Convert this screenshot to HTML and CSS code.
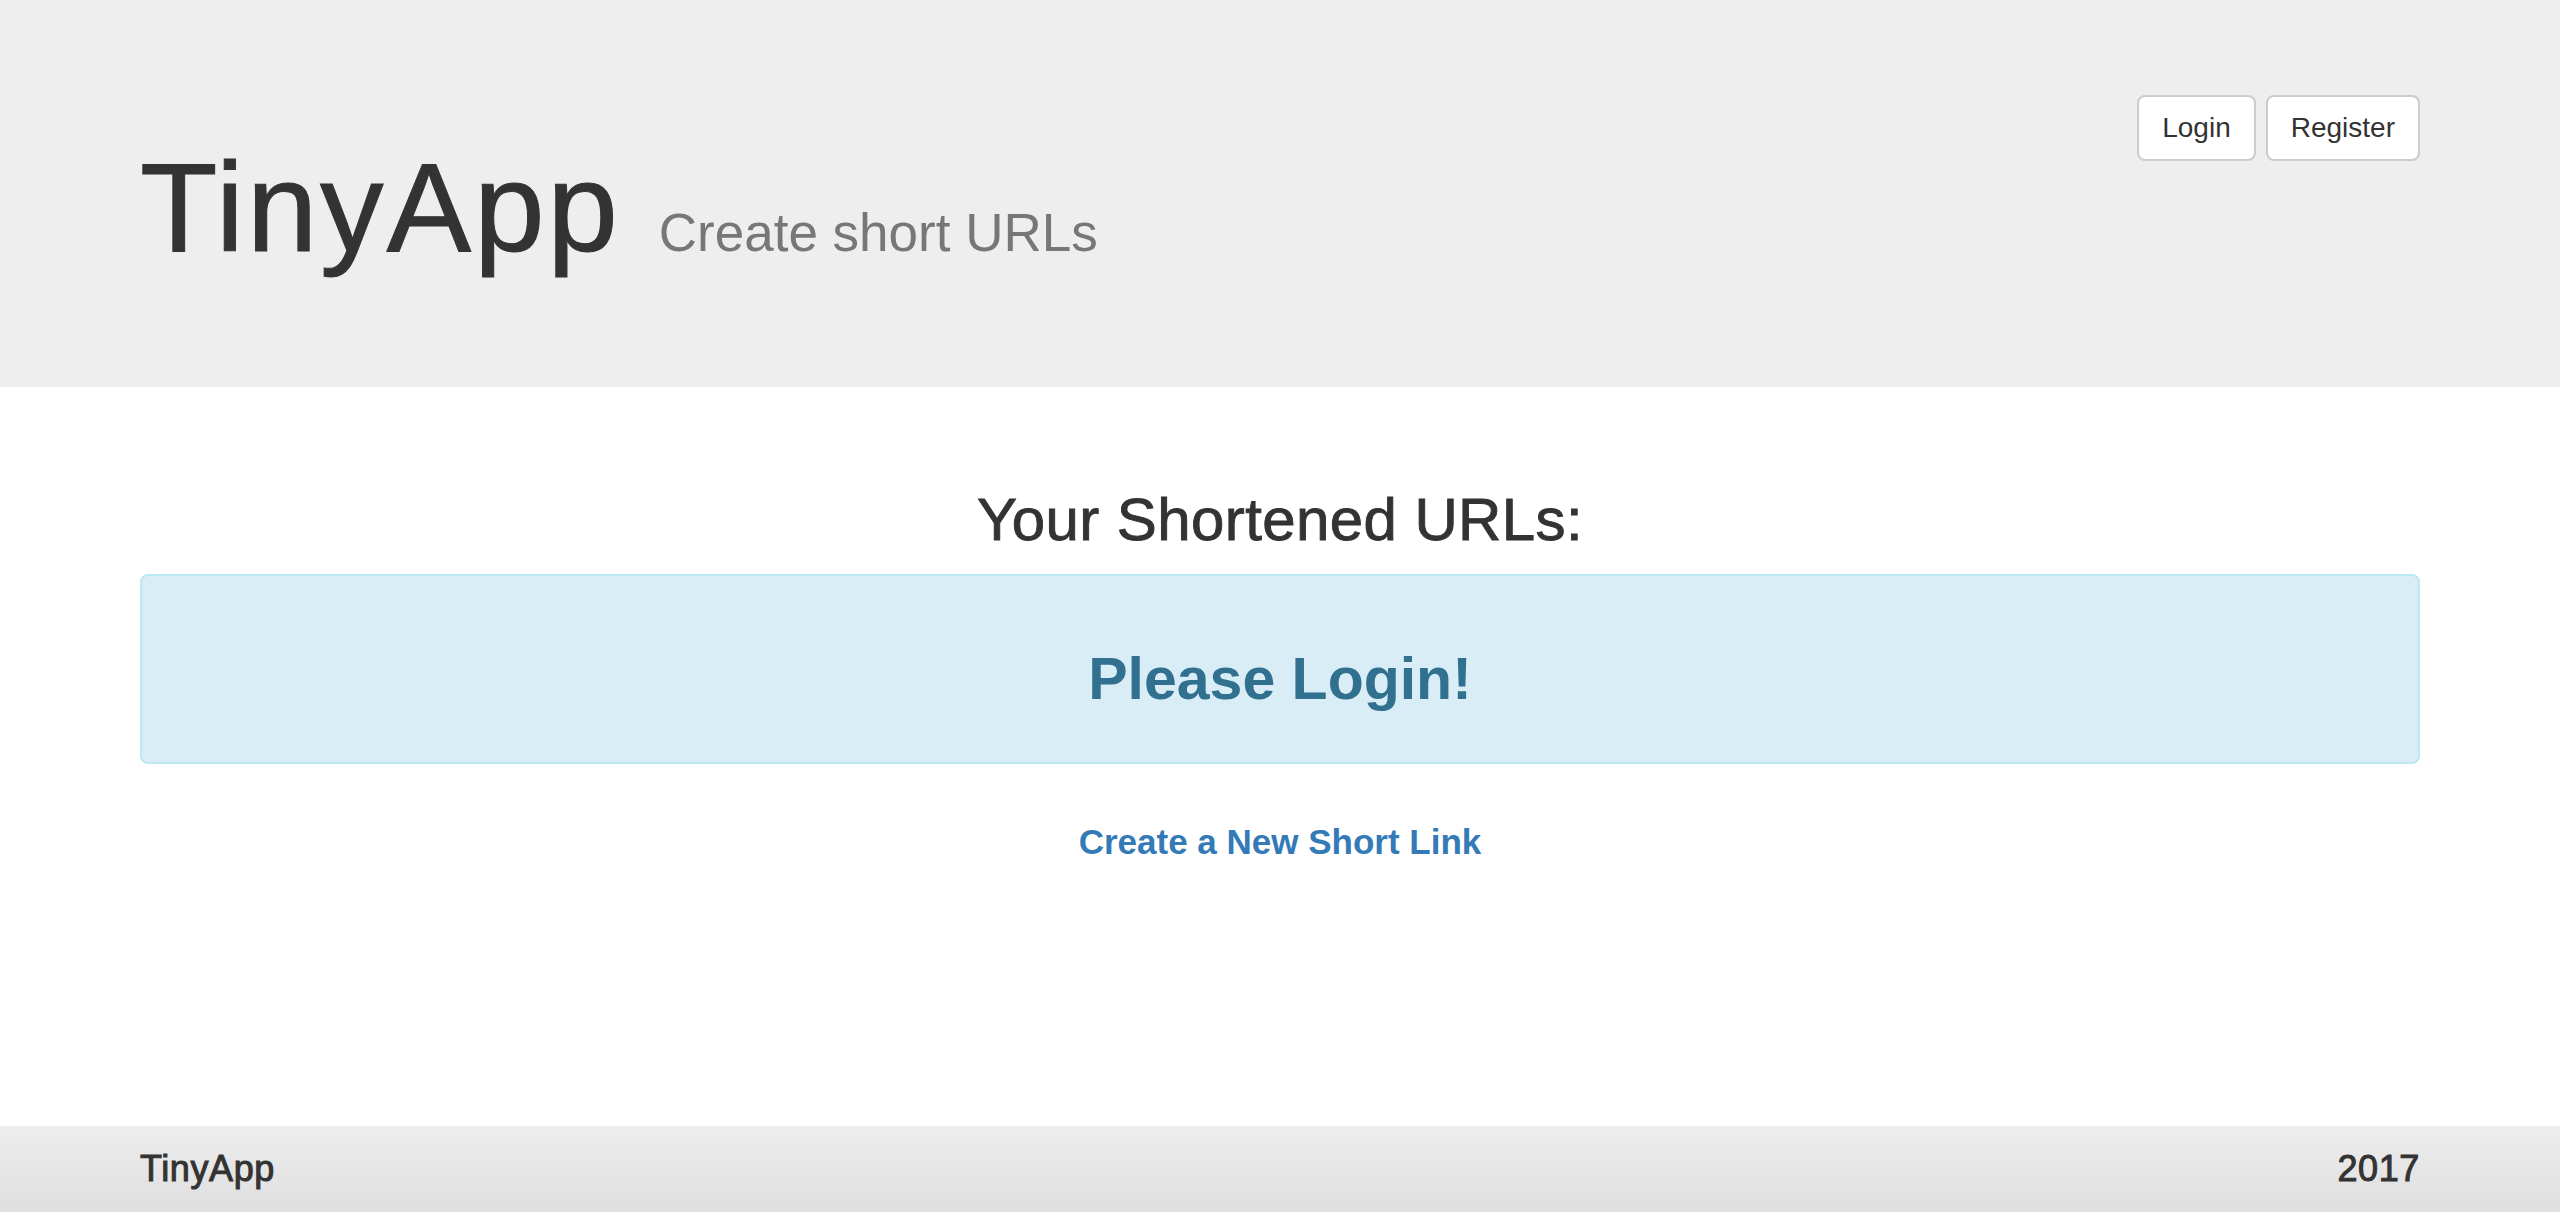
FILE: index.html
```html
<!DOCTYPE html>
<html lang="en">
<head>
<meta charset="utf-8">
<title>TinyApp</title>
<link rel="stylesheet" href="styles.css">
</head>
<body>
<div class="page">
  <header class="jumbotron">
    <div class="container header-row">
      <h1 class="brand">TinyApp<small class="tagline">Create short URLs</small></h1>
      <nav class="auth">
        <a class="btn" href="#">Login</a>
        <a class="btn" href="#">Register</a>
      </nav>
    </div>
  </header>
  <main class="container main">
    <h2 class="title">Your Shortened URLs:</h2>
    <div class="alert">
      <h2 class="alert-text">Please Login!</h2>
    </div>
    <h4 class="new-link"><a href="#">Create a New Short Link</a></h4>
  </main>
  <footer class="footer">
    <div class="container footer-row">
      <span class="footer-text">TinyApp</span>
      <span class="footer-text">2017</span>
    </div>
  </footer>
</div>
</body>
</html>
```
FILE: styles.css
```css
* { box-sizing: border-box; }
html, body { margin: 0; padding: 0; }
body {
  font-family: "Liberation Sans", Arial, sans-serif;
  color: #333;
  background: #fff;
}
.page {
  min-height: 100vh;
  display: flex;
  flex-direction: column;
}
.container {
  width: 100%;
  padding: 0 140px;
}
.jumbotron {
  background: #eeeeee;
  padding: 95px 0 0;
  height: 387px;
}
.header-row {
  display: flex;
  justify-content: space-between;
  align-items: flex-start;
}
.brand {
  margin: 43px 0 0;
  font-size: 127px;
  line-height: 1.1;
  font-weight: normal;
  color: #333;
  letter-spacing: 2.8px;
  -webkit-text-stroke: 1px #333;
}
.tagline {
  font-size: 53px;
  color: #777;
  margin-left: 38px;
  letter-spacing: 0;
  -webkit-text-stroke: 0;
}
.auth {
  display: flex;
  gap: 10px;
}
.btn {
  display: inline-block;
  height: 66px;
  line-height: 62px;
  padding: 0 23px;
  font-size: 28px;
  color: #333;
  background: #fff;
  border: 2px solid #ccc;
  border-radius: 8px;
  text-decoration: none;
}
.main {
  flex: 1;
}
.title {
  margin: 100px 0 21px;
  text-align: center;
  font-size: 60px;
  line-height: 66px;
  font-weight: normal;
  color: #333;
  letter-spacing: 0.4px;
  -webkit-text-stroke: 0.9px #333;
}
.alert {
  background: #d9edf7;
  border: 2px solid #bce8f1;
  border-radius: 8px;
  padding: 30px;
}
.alert-text {
  margin: 40px 0 20px;
  text-align: center;
  font-size: 59px;
  line-height: 66px;
  font-weight: bold;
  color: #31708f;
}
.new-link {
  margin: 59px 0 0;
  text-align: center;
  font-size: 35px;
  line-height: 1.1;
  font-weight: bold;
}
.new-link a {
  color: #337ab7;
  text-decoration: none;
}
.footer {
  height: 86px;
  background: linear-gradient(#ededed, #dfdfdf);
}
.footer-row {
  display: flex;
  justify-content: space-between;
  align-items: center;
  height: 86px;
}
.footer-text {
  font-size: 36px;
  line-height: 86px;
  color: #333;
  letter-spacing: 0.6px;
  -webkit-text-stroke: 1px #333;
}
```
